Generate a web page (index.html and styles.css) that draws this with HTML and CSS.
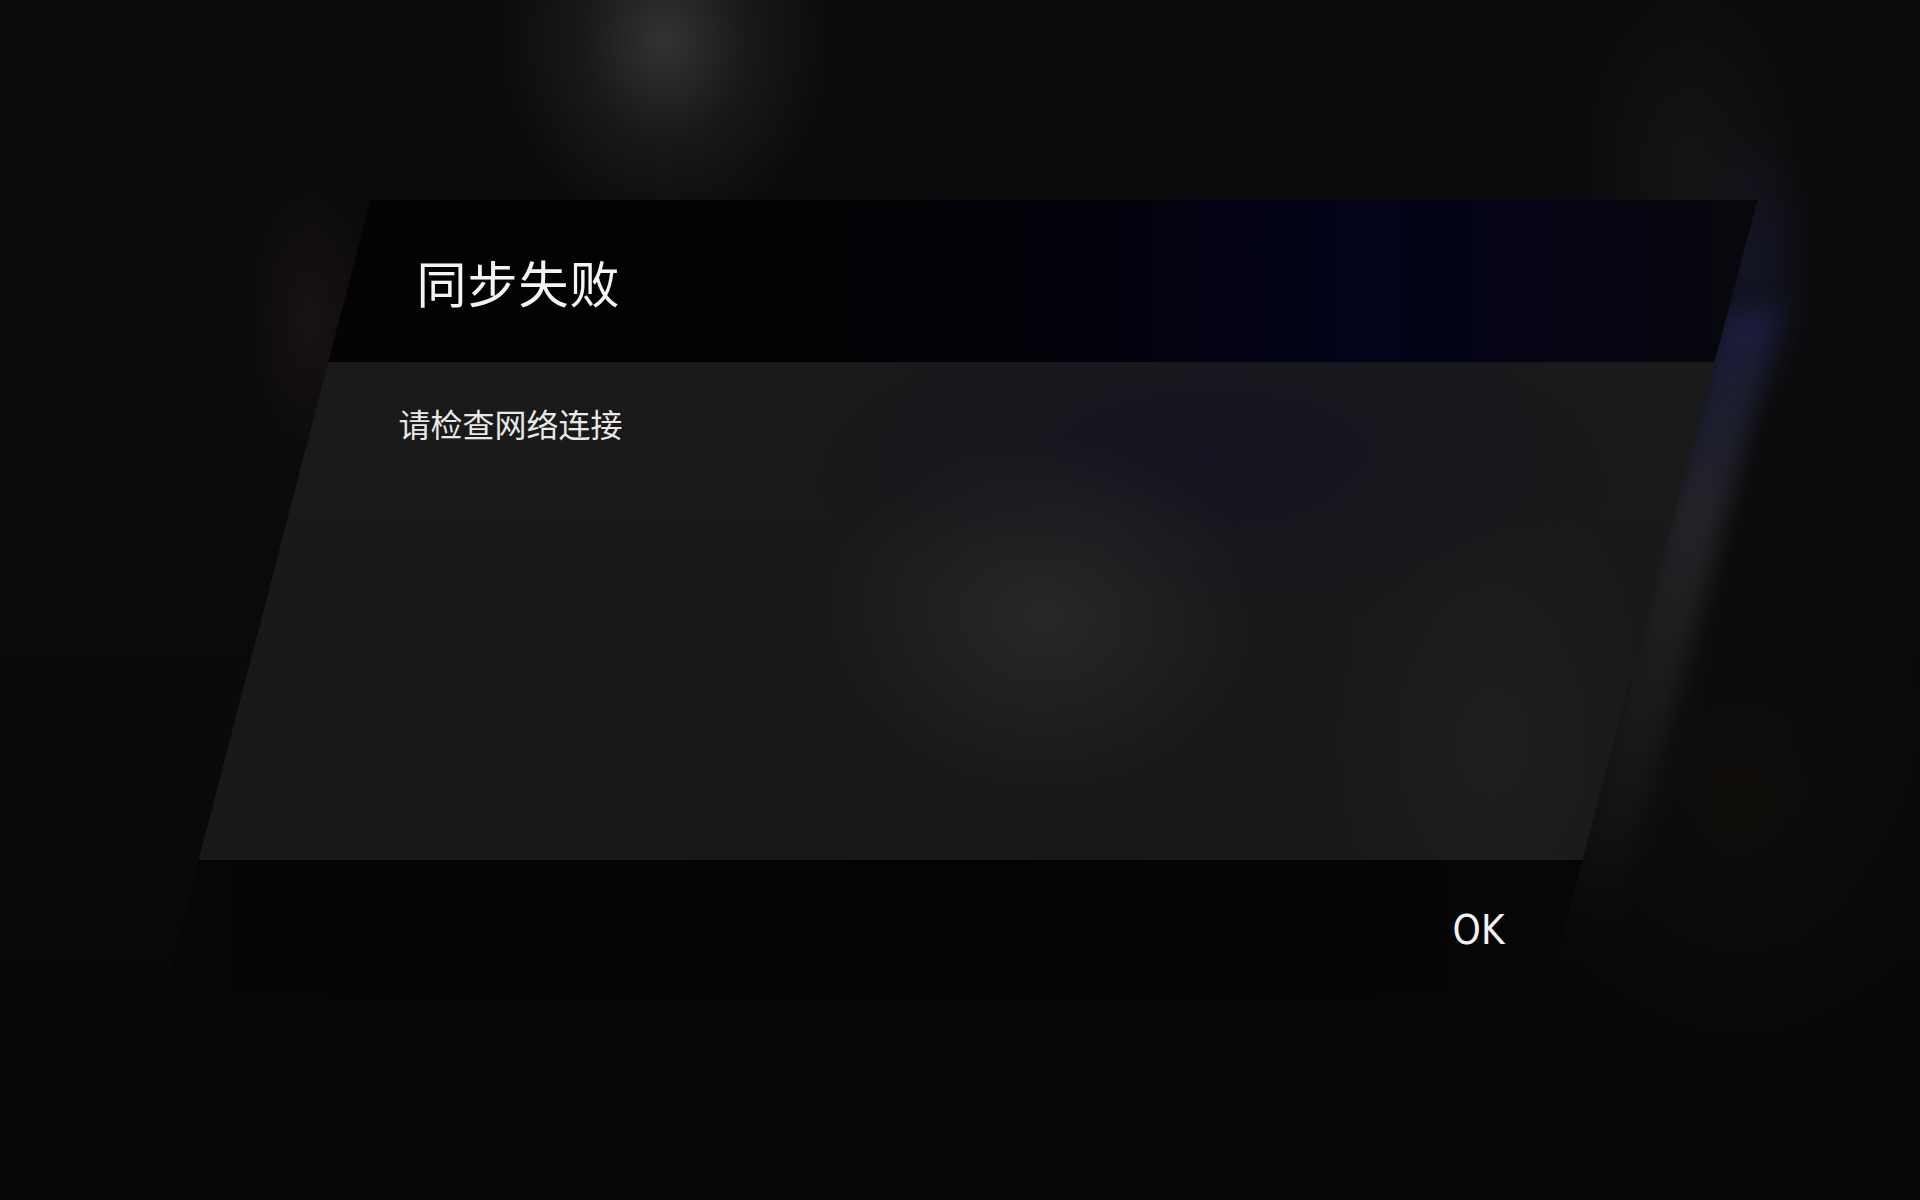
FILE: index.html
```html
<!DOCTYPE html>
<html lang="zh-CN">
<head>
  <meta charset="UTF-8" />
  <meta name="viewport" content="width=device-width, initial-scale=1.0"/>
  <title>同步失败</title>
  <link rel="stylesheet" href="styles.css">
</head>
<body>
  <div class="scene">
    <div class="dialog-wrap">
      <div class="dialog">
        <header class="dialog-head">
          <h1>同步失败</h1>
        </header>
        <div class="dialog-body">
          <p>请检查网络连接</p>
        </div>
        <footer class="dialog-foot">
          <button class="ok-button">OK</button>
        </footer>
      </div>
    </div>
  </div>
</body>
</html>
```

FILE: styles.css
```css
html, body {
  margin: 0;
  height: 100%;
}

body {
  font-family: "Noto Sans CJK SC", "Noto Sans", sans-serif;
  color: #f2f2f2;
  overflow: hidden;
  background:
    radial-gradient(ellipse 170px 200px at 665px 40px, rgba(58,58,58,0.85), rgba(40,40,40,0.45) 50%, rgba(20,20,20,0) 100%),
    radial-gradient(ellipse 70px 150px at 310px 320px, rgba(60,34,34,0.3), rgba(40,20,20,0) 100%),
    radial-gradient(ellipse 70px 150px at 1755px 270px, rgba(30,34,80,0.35), rgba(20,20,50,0) 100%),
    radial-gradient(ellipse 120px 200px at 1690px 170px, rgba(38,38,38,0.35), rgba(20,20,20,0) 100%),
    radial-gradient(ellipse 200px 260px at 1740px 800px, rgba(20,16,12,0.6), rgba(16,14,12,0) 100%),
    linear-gradient(to bottom, #0b0b0b, #0a0a0a 60%, #060606);
}

.scene {
  display: flex;
  justify-content: center;
  padding-top: 200px;
}

.dialog-wrap {
  position: relative;
  width: 1595px;
  height: 799px;
}

/* light streak along the slanted right edge */
.dialog-wrap::before {
  content: "";
  position: absolute;
  top: 110px;
  right: 60px;
  width: 60px;
  height: 620px;
  transform: skewX(-15deg);
  background: linear-gradient(to bottom, rgba(36,40,96,0.5), rgba(46,46,52,0.7) 35%, rgba(36,36,36,0.5) 70%, rgba(20,20,20,0));
  filter: blur(12px);
}

.dialog {
  position: relative;
  display: flex;
  flex-direction: column;
  height: 100%;
  clip-path: polygon(208px 0, 100% 0, calc(100% - 212px) 100%, 0 100%);
}

.dialog-head {
  height: 162px;
  display: flex;
  align-items: center;
  padding-left: 254px;
  background: linear-gradient(to right, #040404 0%, #020202 35%, #02020a 55%, #03031a 75%, #050512 92%, #08080c 100%);
}

.dialog-head h1 {
  margin: 0;
  font-size: 50px;
  font-weight: 400;
  letter-spacing: 1px;
  color: #f4f4f4;
}

.dialog-body {
  flex: 1;
  padding: 38px 0 0 236px;
  background:
    radial-gradient(ellipse 220px 180px at 880px 255px, rgba(44,44,44,0.75), rgba(40,40,40,0) 100%),
    radial-gradient(ellipse 420px 180px at 1050px 90px, rgba(18,18,34,0.75), rgba(20,20,40,0) 100%),
    radial-gradient(ellipse 180px 260px at 1330px 380px, rgba(36,36,36,0.55), rgba(30,30,30,0) 100%),
    linear-gradient(to bottom, #1a1a1b, #181819 60%, #181818);
}

.dialog-body p {
  margin: 0;
  font-size: 32px;
  color: #e8e8e8;
}

.dialog-foot {
  height: 139px;
  display: flex;
  align-items: center;
  justify-content: flex-end;
  padding-right: 253px;
  background: linear-gradient(to right, #060606, #040404 50%, #070707);
}

.ok-button {
  background: none;
  border: none;
  padding: 0;
  font-family: "DejaVu Sans Condensed", "DejaVu Sans", sans-serif;
  font-size: 40px;
  color: #f2f2f2;
  cursor: pointer;
}
```
